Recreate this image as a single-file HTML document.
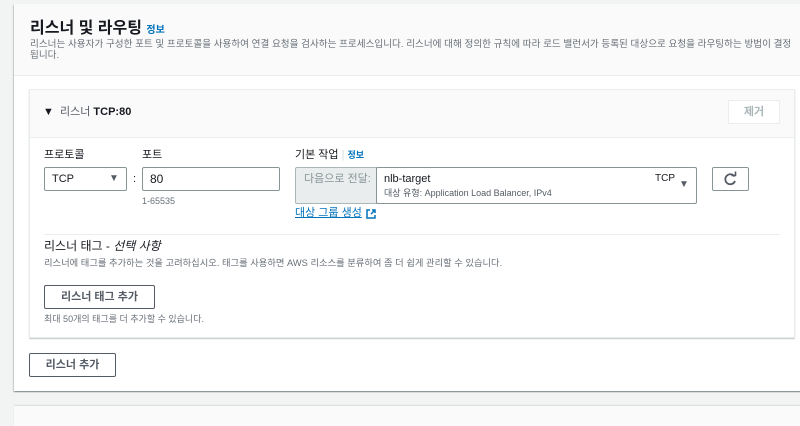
<!DOCTYPE html>
<html><head><meta charset="utf-8"><style>
*{box-sizing:border-box;margin:0;padding:0}
body{width:800px;height:421px;overflow:hidden;background:#f2f3f3;font-family:"Liberation Sans","Noto Sans CJK KR",sans-serif;color:#16191f;position:relative}
.a{position:absolute;white-space:nowrap;line-height:1.15}
.card{position:absolute;left:14px;top:4px;width:800px;height:387px;background:#fff;box-shadow:0 1px 1px rgba(0,28,36,.3),1px 1px 1px rgba(0,28,36,.15),-1px 1px 1px rgba(0,28,36,.15)}
.hd{position:absolute;left:0;top:0;width:100%;height:72px;background:#fafafa;border-bottom:1px solid #eaeded}
.inner{position:absolute;left:29px;top:89px;width:766px;height:249px;background:#fff;border:1px solid #eaeded;box-shadow:0 1px 1px rgba(0,28,36,.25)}
.ih{position:absolute;left:0;top:0;width:100%;height:48px;background:#fafafa;border-bottom:1px solid #eaeded}
.btn{position:absolute;border:1px solid #545b64;background:#fff;font-size:11px;color:#545b64;text-align:center;border-radius:2px;font-weight:bold}
.lab{font-size:11px;color:#16191f}
.in{position:absolute;border:1px solid #aab7b8;border-radius:2px;background:#fff;font-size:11px}
.small{font-size:9px;color:#687078}
.info{color:#0073bb;font-size:9px;font-weight:bold}
</style></head><body>
<div class="card">
<div class="hd"></div>
</div>
<div class="a" style="left:30px;top:20px;font-size:16px;font-weight:bold">리스너 및 라우팅 <span class="info" style="font-size:10px">정보</span></div>
<div class="a small" style="left:30px;top:39px;font-size:9.6px;line-height:11px;white-space:normal;width:770px">리스너는 사용자가 구성한 포트 및 프로토콜을 사용하여 연결 요청을 검사하는 프로세스입니다. 리스너에 대해 정의한 규칙에 따라 로드 밸런서가 등록된 대상으로 요청을 라우팅하는 방법이 결정됩니다.</div>
<div class="inner"><div class="ih"></div></div>
<div class="a" style="left:43px;top:106px;font-size:11px">▼</div>
<div class="a" style="left:60px;top:106px;font-size:11px;color:#545b64">리스너 <b style="color:#16191f">TCP:80</b></div>
<div class="a" style="left:728px;top:100px;width:52px;height:24px;border:1px solid #eaeded;background:#fff;font-size:11px;color:#aab7b8;text-align:center;line-height:22px;font-weight:bold">제거</div>
<div class="a lab" style="left:44px;top:149px">프로토콜</div>
<div class="a lab" style="left:142px;top:149px">포트</div>
<div class="in" style="left:44px;top:167px;width:83px;height:24px;border-color:#879596"><span class="a" style="left:7px;top:5px">TCP</span><span class="a" style="left:64px;top:5px;font-size:10px;color:#545b64">▼</span></div>
<div class="a" style="left:133px;top:173px;font-size:11px">:</div>
<div class="in" style="left:142px;top:167px;width:138px;height:24px;border-color:#879596"><span class="a" style="left:7px;top:5px;font-size:12px">80</span></div>
<div class="a small" style="left:142px;top:196px">1-65535</div>
<div class="a lab" style="left:295px;top:149px">기본 작업 <span style="color:#d5dbdb">|</span> <span class="info">정보</span></div>
<div class="a" style="left:295px;top:167px;width:82px;height:37px;background:#eaeded;border:1px solid #aab7b8;border-radius:2px 0 0 2px;font-size:11px;color:#879596;padding:5px 0 0 8px">다음으로 전달:</div>
<div class="in" style="left:376px;top:167px;width:321px;height:37px;border-color:#879596"><span class="a" style="left:7px;top:5px;font-size:11px">nlb-target</span><span class="a" style="left:7px;top:20px;font-size:9px;color:#545b64">대상 유형: Application Load Balancer, IPv4</span><span class="a" style="left:278px;top:5px;font-size:10px">TCP</span><span class="a" style="left:302px;top:11px;font-size:10px;color:#545b64">▼</span></div>
<div class="a" style="left:712px;top:167px;width:37px;height:24px;border:1px solid #879596;border-radius:2px;background:#fff">
<svg width="35" height="22" viewBox="0 0 35 22"><path d="M21.5 8.5A5 5 0 1 0 22 13" fill="none" stroke="#545b64" stroke-width="1.8"/><path d="M18.5 7.5h4v-4" fill="none" stroke="#545b64" stroke-width="1.6"/></svg></div>
<div class="a" style="left:295px;top:207px;font-size:11px;color:#0073bb;text-decoration:underline">대상 그룹 생성</div>
<svg class="a" style="left:366px;top:209px" width="10" height="10" viewBox="0 0 10 10"><path d="M4 1H1v8h8V6" fill="none" stroke="#0073bb" stroke-width="1.5"/><path d="M5 5L9 1M6 1h3v3" fill="none" stroke="#0073bb" stroke-width="1.5"/></svg>
<div class="a" style="left:44px;top:234px;width:736px;height:1px;background:#eaeded"></div>
<div class="a" style="left:44px;top:240px;font-size:12px">리스너 태그 - <i>선택 사항</i></div>
<div class="a small" style="left:44px;top:258px;font-size:9.3px">리스너에 태그를 추가하는 것을 고려하십시오. 태그를 사용하면 AWS 리소스를 분류하여 좀 더 쉽게 관리할 수 있습니다.</div>
<div class="btn" style="left:44px;top:285px;width:111px;height:24px;line-height:22px">리스너 태그 추가</div>
<div class="a small" style="left:44px;top:314px">최대 50개의 태그를 더 추가할 수 있습니다.</div>
<div class="btn" style="left:29px;top:353px;width:87px;height:24px;line-height:22px">리스너 추가</div>
<div class="a" style="left:14px;top:406px;width:800px;height:20px;background:#fafafa;box-shadow:0 -1px 1px rgba(0,28,36,.1)"></div>
</body></html>
